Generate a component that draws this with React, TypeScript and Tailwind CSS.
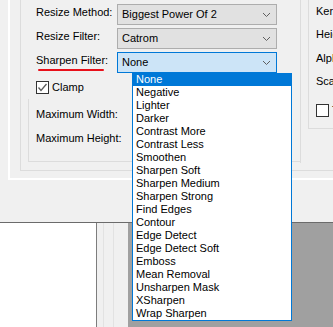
const FILTERS = [
  "None",
  "Negative",
  "Lighter",
  "Darker",
  "Contrast More",
  "Contrast Less",
  "Smoothen",
  "Sharpen Soft",
  "Sharpen Medium",
  "Sharpen Strong",
  "Find Edges",
  "Contour",
  "Edge Detect",
  "Edge Detect Soft",
  "Emboss",
  "Mean Removal",
  "Unsharpen Mask",
  "XSharpen",
  "Wrap Sharpen",
];

function Chevron() {
  return (
    <svg width="9" height="6" viewBox="0 0 9 6" className="shrink-0">
      <polyline points="1,1 4.5,4.5 8,1" fill="none" stroke="#5f5f5f" strokeWidth="1" />
    </svg>
  );
}

function Combo({ value, open = false }: { value: string; open?: boolean }) {
  return (
    <div
      className={`flex h-[21px] w-[160px] items-center justify-between border pl-[4px] pr-[5px] ${
        open ? "border-[#0078d7] bg-[#cce4f7]" : "border-[#adadad] bg-[#e1e1e1]"
      }`}
    >
      <span>{value}</span>
      <Chevron />
    </div>
  );
}

function Row({ label, children, underline = false }: { label: string; children: React.ReactNode; underline?: boolean }) {
  return (
    <div className="flex h-[21px] items-center">
      <div className="relative w-[96px] pl-[15px]">
        <span className="-mt-[5px] block">{label}</span>
        {underline && (
          <div className="absolute left-[17px] top-[10px] h-[2px] w-[66px] rounded-full bg-[#e8101a]" />
        )}
      </div>
      {children}
    </div>
  );
}

function CheckBox({ checked = false }: { checked?: boolean }) {
  return (
    <div className="flex h-[13px] w-[13px] shrink-0 items-center justify-center border border-[#333333] bg-white">
      {checked && (
        <svg width="11" height="11" viewBox="0 0 11 11">
          <polyline points="1.5,5.5 4,8.5 9.5,2" fill="none" stroke="#5a5a5a" strokeWidth="1.3" />
        </svg>
      )}
    </div>
  );
}

export default function App() {
  return (
    <div
      className="relative h-[327px] w-[333px] overflow-hidden bg-[#f0f0f0] text-[11px] leading-[13px] text-black"
      style={{ fontFamily: '"Liberation Sans", Arial, sans-serif' }}
    >
      {/* dialog area */}
      <div className="flex h-[223px] border-b border-[#6b6b6b]">
        <div className="ml-[8px] flex h-[180px] flex-1 border-b-2 border-l-2 border-white">
          <div className="ml-[10px] flex h-[171px] flex-1 border-b border-l border-[#dcdcdc]">
            {/* left column */}
            <div className="flex h-[163px] w-[280px] shrink-0 flex-col border-r border-[#dcdcdc] pt-[4px]">
              <Row label="Resize Method:">
                <Combo value="Biggest Power Of 2" />
              </Row>
              <div className="h-[3px]" />
              <Row label="Resize Filter:">
                <Combo value="Catrom" />
              </Row>
              <div className="h-[3px]" />
              <Row label="Sharpen Filter:" underline>
                <Combo value="None" open />
              </Row>
              <div className="mt-[8px] flex items-center gap-[3px] pl-[15px]">
                <CheckBox checked />
                <span>Clamp</span>
              </div>
              <div className="ml-[7px] mt-[5px] flex h-[63px] flex-col border-b border-l border-[#dcdcdc] pl-[7px] pt-[9px]">
                <span>Maximum Width:</span>
                <span className="mt-[11px]">Maximum Height:</span>
              </div>
            </div>
            {/* right column */}
            <div className="ml-[7px] flex h-[129px] flex-1 flex-col border-b border-l border-[#dcdcdc] pl-[7px] pt-[5px] whitespace-nowrap">
              <span>Kernel Width:</span>
              <span className="mt-[10px]">Height:</span>
              <span className="mt-[11px]">Alpha:</span>
              <span className="mt-[10px]">Scale:</span>
              <div className="mt-[16px] flex items-center gap-[3px]">
                <CheckBox />
                <span>Tile</span>
              </div>
            </div>
          </div>
        </div>
      </div>

      {/* bottom area */}
      <div className="flex h-[104px]">
        <div className="w-[97px] border-r border-[#7d7d7d] bg-white" />
        <div className="w-[7px] border-r border-[#e2e2e2]" />
        <div className="w-[10px] border-r border-[#e2e2e2]" />
        <div className="w-[14px]" />
        <div className="flex-1 bg-[#a0a0a0]" />
      </div>

      {/* open dropdown list */}
      <div className="absolute left-[132px] top-[73px] w-[160px] border-x border-b border-[#0078d7] bg-white">
        {FILTERS.map((f, i) => (
          <div
            key={f}
            className={`h-[13px] whitespace-nowrap pl-[3px] ${i === 0 ? "bg-[#0078d7] text-white" : ""}`}
          >
            {f}
          </div>
        ))}
      </div>
    </div>
  );
}
